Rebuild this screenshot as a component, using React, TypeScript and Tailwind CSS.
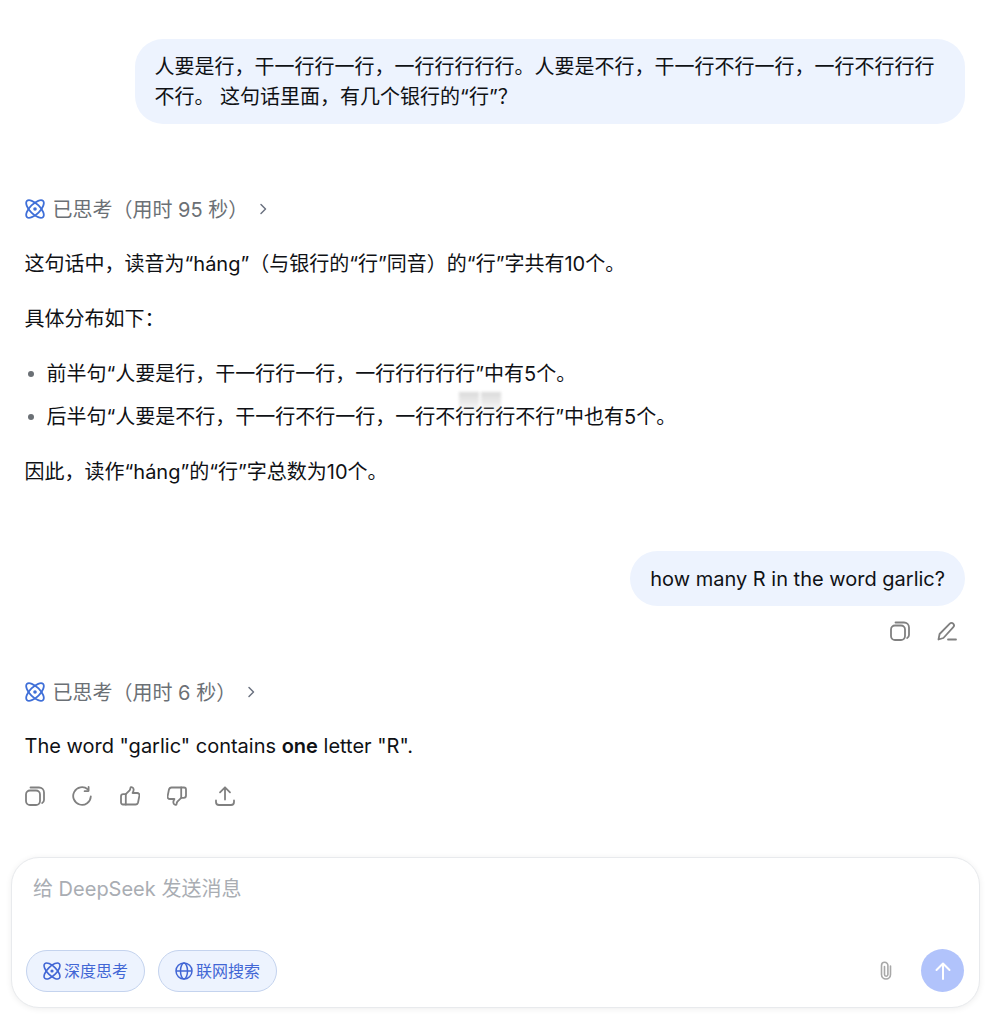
import type { ReactNode } from 'react';

function AtomIcon({ className }: { className: string }) {
  return (
    <svg viewBox="0 0 20 20" fill="none" stroke="currentColor" strokeWidth="1.8" className={className}>
      <ellipse cx="10" cy="10" rx="11.4" ry="5" transform="rotate(45 10 10)" />
      <ellipse cx="10" cy="10" rx="11.4" ry="5" transform="rotate(-45 10 10)" />
      <circle cx="10" cy="10" r="1.8" fill="currentColor" stroke="none" />
    </svg>
  );
}

function Chevron() {
  return (
    <svg viewBox="0 0 10 14" fill="none" stroke="#6b7280" strokeWidth="1.5" strokeLinecap="round" strokeLinejoin="round" className="w-[10px] h-[14px]">
      <path d="M3 2.5 7.5 7 3 11.5" />
    </svg>
  );
}

function Thought({ text }: { text: string }) {
  return (
    <div className="flex items-center h-[30px] text-[20px] text-[#6b7075]">
      <AtomIcon className="w-[20px] h-[20px] text-[#3f6fd8] mr-[8px]" />
      <span className="pt-[2px]">{text}</span>
      <span className="ml-[10px]">
        <Chevron />
      </span>
    </div>
  );
}

function CopyIcon() {
  return (
    <svg viewBox="0 0 20 20" fill="none" stroke="#808080" strokeWidth="1.8" strokeLinecap="round" className="w-[20px] h-[20px]">
      <rect x="1" y="4.5" width="14" height="14.5" rx="4" />
      <path d="M5.5 1.5h8.5a5 5 0 0 1 5 5v7.5a3.5 3.5 0 0 1-1.8 3" />
    </svg>
  );
}

function PencilIcon() {
  return (
    <svg viewBox="0 0 20 20" fill="none" stroke="#808080" strokeWidth="1.8" strokeLinecap="round" strokeLinejoin="round" className="w-[20px] h-[20px]">
      <path d="M1.5 18.5 2.6 13 12.8 2.6a2.4 2.4 0 0 1 3.4 0 2.6 2.6 0 0 1 .1 3.6L6.4 17 1.5 18.5Z" />
      <path d="M11 18.5h8" />
    </svg>
  );
}

function RetryIcon() {
  return (
    <svg viewBox="0 0 20 20" fill="none" stroke="#808080" strokeWidth="1.8" strokeLinecap="round" strokeLinejoin="round" className="w-[20px] h-[20px]">
      <path d="M18.8 10.5A8.8 8.8 0 1 1 15.8 3.4" />
      <path d="M16.6 1v3.6a.6.6 0 0 1-.6.6h-3.4" />
    </svg>
  );
}

function ThumbUpIcon() {
  return (
    <svg viewBox="0 0 20 20" fill="none" stroke="#808080" strokeWidth="1.8" strokeLinecap="round" strokeLinejoin="round" className="w-[20px] h-[20px]">
      <path d="M5.8 8.2 9.6 4.4c.6-.8.8-1.8 1-3 .2-.6 2.7-.4 3 1.7.2 1.4-.4 2.8-1 3.9h4.6c1.5 0 2.6 1.3 2.2 2.8l-1.3 6.4c-.3 1.3-1.2 2.3-2.6 2.3H3c-1.2 0-2-.9-2-2v-6c0-1.3 1-2.3 2.3-2.3h2.5Z" />
      <path d="M5.8 8.2v10.3" />
    </svg>
  );
}

function ThumbDownIcon() {
  return (
    <svg viewBox="0 0 20 20" fill="none" stroke="#808080" strokeWidth="1.8" strokeLinecap="round" strokeLinejoin="round" className="w-[20px] h-[20px]">
      <path d="M14.2 11.8 10.4 15.6c-.6.8-.8 1.8-1 3-.2.6-2.7.4-3-1.7-.2-1.4.4-2.8 1-3.9H2.8C1.3 13 .2 11.7.6 10.2l1.3-6.4C2.2 2.5 3.1 1.5 4.5 1.5H17c1.2 0 2 .9 2 2v6c0 1.3-1 2.3-2.3 2.3h-2.5Z" />
      <path d="M14.2 11.8V1.5" />
    </svg>
  );
}

function ShareIcon() {
  return (
    <svg viewBox="0 0 20 20" fill="none" stroke="#808080" strokeWidth="1.8" strokeLinecap="round" strokeLinejoin="round" className="w-[20px] h-[20px]">
      <path d="M10 13.5V1.5M5 6.3l5-5 5 5" />
      <path d="M1 14.5V16a3 3 0 0 0 3 3h12a3 3 0 0 0 3-3v-1.5" />
    </svg>
  );
}

function GlobeIcon() {
  return (
    <svg viewBox="0 0 18 18" fill="none" stroke="currentColor" strokeWidth="1.5" className="w-[18px] h-[18px]">
      <circle cx="9" cy="9" r="8" />
      <ellipse cx="9" cy="9" rx="3.5" ry="8" />
      <path d="M1 9h16" />
    </svg>
  );
}

function ClipIcon() {
  return (
    <svg viewBox="0 0 16 20" fill="none" stroke="#a8a8a8" strokeWidth="1.6" strokeLinecap="round" className="w-[16px] h-[20px]">
      <path d="M6.5 5.5v8a1.7 1.7 0 0 0 3.4 0V4.5a3.2 3.2 0 0 0-6.4 0v9a4.5 4.5 0 0 0 9 0V5" />
    </svg>
  );
}

function Chip({ icon, label }: { icon: ReactNode; label: string }) {
  return (
    <div className="flex items-center justify-center gap-[3px] w-[119px] h-[42px] rounded-full border border-[#c4d3ee] bg-[#edf3fe] text-[#4166d5] text-[16px]">
      {icon}
      <span>{label}</span>
    </div>
  );
}

export default function App() {
  return (
    <div
      className="relative w-[989px] h-[1019px] overflow-hidden bg-white text-[20px] leading-[30px] text-[#0f1115] [text-spacing-trim:space-all]"
      style={{ fontFamily: 'Inter, "Noto Sans CJK SC", sans-serif' }}
    >
      <div className="flex flex-col pl-[24.5px] pr-[24px] pt-[39px]">
        <div className="self-end w-[830px] rounded-[28px] bg-[#edf3fe] pl-[19.5px] pr-[20px] pt-[13px] h-[85px]">
          人要是行，干一行行一行，一行行行行行。人要是不行，干一行不行一行，一行不行行行不行。 这句话里面，有几个银行的“行”？
        </div>

        <div className="mt-[70px]">
          <Thought text="已思考（用时 95 秒）" />
        </div>
        <div className="mt-[25px] flex flex-col">
          <p>这句话中，读音为“háng”（与银行的“行”同音）的“行”字共有10个。</p>
          <p className="mt-[25px]">具体分布如下：</p>
          <ul className="mt-[25px] flex flex-col gap-[13px]">
            <li className="flex items-center">
              <span className="w-[6px] h-[6px] rounded-full bg-[#6b7075] ml-[3px] mr-[13px]" />
              前半句“人要是行，干一行行一行，一行行行行行”中有5个。
            </li>
            <li className="flex items-center">
              <span className="w-[6px] h-[6px] rounded-full bg-[#6b7075] ml-[3px] mr-[13px]" />
              后半句“人要是不行，干一行不行一行，一行不行行行不行”中也有5个。
            </li>
          </ul>
          <p className="mt-[25px]">因此，读作“háng”的“行”字总数为10个。</p>
        </div>

        <div className="self-end mt-[64px] rounded-[28px] bg-[#edf3fe] px-[20px] py-[12.5px]">
          how many R in the word garlic?
        </div>
        <div className="self-end flex items-center gap-[27px] mt-[15px] mr-[8px] h-[20px]">
          <CopyIcon />
          <PencilIcon />
        </div>

        <div className="mt-[36px]">
          <Thought text="已思考（用时 6 秒）" />
        </div>
        <p className="mt-[24px]">
          The word "garlic" contains <strong className="font-semibold">one</strong> letter "R".
        </p>
        <div className="flex items-center gap-[27.5px] mt-[25px] h-[20px]">
          <CopyIcon />
          <RetryIcon />
          <ThumbUpIcon />
          <ThumbDownIcon />
          <ShareIcon />
        </div>
      </div>

      {/* Composer */}
      <div className="absolute left-[10.5px] top-[856.5px] w-[969px] h-[151px] rounded-[28px] border border-[#e8eaed] bg-white shadow-[0_1px_6px_rgba(0,0,0,0.07)] flex flex-col justify-between pl-[14.5px] pr-[14.5px] pt-[16.5px] pb-[14.5px]">
        <div className="pl-[7px] text-[#a9adb3]">给 DeepSeek 发送消息</div>
        <div className="flex items-center">
          <Chip icon={<AtomIcon className="w-[18px] h-[18px]" />} label="深度思考" />
          <div className="ml-[13px]">
            <Chip icon={<GlobeIcon />} label="联网搜索" />
          </div>
          <div className="ml-auto flex items-center">
            <ClipIcon />
            <div className="ml-[27px] w-[43px] h-[43px] rounded-full bg-[#b1c3fb] flex items-center justify-center">
              <svg viewBox="0 0 20 20" fill="none" stroke="#fff" strokeWidth="2" strokeLinecap="round" strokeLinejoin="round" className="w-[20px] h-[20px]">
                <path d="M10 18V2.5M3.5 9 10 2.5 16.5 9" />
              </svg>
            </div>
          </div>
        </div>
      </div>

      {/* Smudge over the list */}
      <div className="absolute left-[459px] top-[392px] w-[20px] h-[22px] bg-gradient-to-b from-[#cfcfcf]/80 to-white/0 blur-[1.5px]" />
      <div className="absolute left-[481px] top-[392px] w-[20px] h-[22px] bg-gradient-to-b from-[#cfcfcf]/80 to-white/0 blur-[1.5px]" />
    </div>
  );
}
